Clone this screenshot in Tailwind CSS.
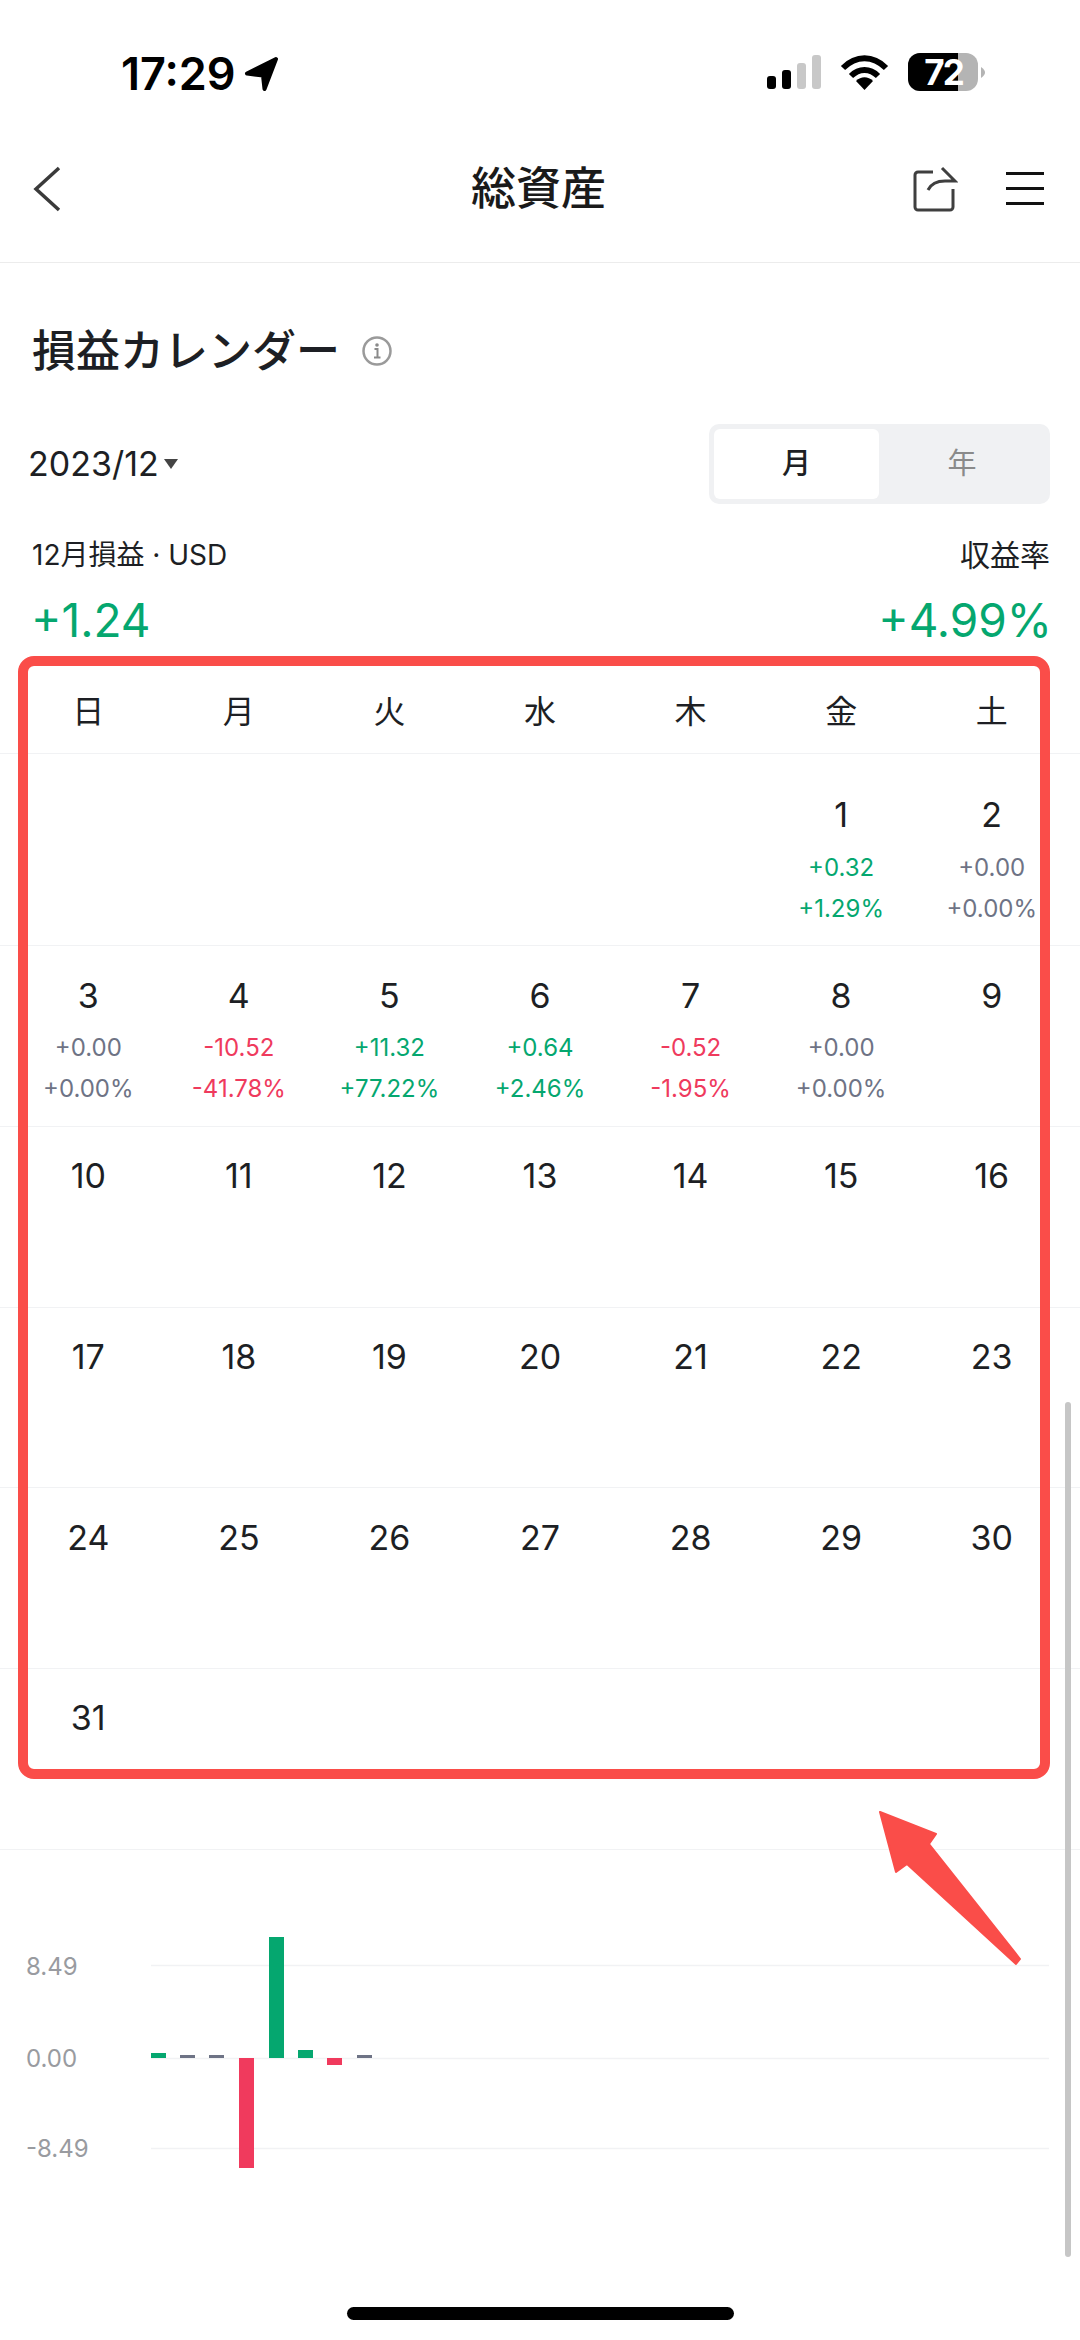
<!DOCTYPE html>
<html lang="ja">
<head>
  <meta charset="UTF-8" />
  <meta name="viewport" content="width=device-width, initial-scale=1.0"/>
  <title>総資産</title>
  <script src="https://cdn.jsdelivr.net/npm/@tailwindcss/browser@4"></script>
</head>
<body class="relative w-[1080px] h-[2340px] overflow-hidden bg-white text-[#1d1f24] font-['Inter','Noto_Sans_CJK_JP',sans-serif]">

  <!-- Status bar -->
  <div class="flex justify-between h-[115px] pt-[41px] pl-[121px] pr-[95px]">
    <div class="flex items-start gap-[8px] pt-[12px]">
      <span class="text-[45px] leading-[41px] font-semibold text-black">17:29</span>
      <svg class="mt-[3px]" width="36" height="36" viewBox="0 0 36 36">
        <path d="M32 3 3 17.500 19 19.500 20.500 33Z" fill="#000" stroke="#000" stroke-width="4" stroke-linejoin="round"/>
      </svg>
    </div>
    <svg width="218" height="64" viewBox="767 41 218 64">
      <rect x="767" y="76" width="9" height="13" rx="3" fill="#000"/>
      <rect x="782" y="70" width="9" height="19" rx="3" fill="#000"/>
      <rect x="797" y="63" width="9" height="26" rx="3" fill="#c8c8c8"/>
      <rect x="812" y="55" width="9" height="34" rx="3" fill="#c8c8c8"/>
      <path d="M843 68C856 55 873 55 886 68" fill="none" stroke="#000" stroke-width="6"/>
      <path d="M851 76C859 68 870 68 878 76" fill="none" stroke="#000" stroke-width="6"/>
      <path d="M856 81C861 76 868 76 873 81L864.500 90Z" fill="#000"/>
      <rect x="908" y="53" width="70" height="38" rx="12" fill="#b4b4b4"/>
      <path d="M920 53H958V91H920A12 12 0 0 1 908 79V65A12 12 0 0 1 920 53Z" fill="#000"/>
      <path d="M981 67C984 69 985 71 985 72.500C985 74 984 76 981 78Z" fill="#b4b4b4"/>
      <text x="943.500" y="85" text-anchor="middle" fill="#fff" font-size="35" font-weight="700" letter-spacing="-2" font-family="Inter">72</text>
    </svg>
  </div>

  <!-- Nav -->
  <div class="flex items-center h-[148px] border-b border-[#ececec]">
    <div class="flex-1 pl-[33px]">
      <svg class="block" width="28" height="46" viewBox="0 0 28 46">
        <path d="M26 2 3 23 26 44" fill="none" stroke="#3a3a3a" stroke-width="3.500"/>
      </svg>
    </div>
    <div class="text-[45px] leading-[60px] font-medium text-[#1a1a1a]">総資産</div>
    <div class="flex-1 flex justify-end items-center gap-[48px] pr-[36px]">
      <svg class="block" width="46" height="46" viewBox="0 0 46 46">
        <path d="M21 6H6A3 3 0 0 0 3 9V41A3 3 0 0 0 6 44H38A3 3 0 0 0 41 41V23" fill="none" stroke="#3f3f3f" stroke-width="3"/>
        <path d="M30 2 43 15H33C24 15 19 18 16 24" fill="none" stroke="#3f3f3f" stroke-width="3"/>
      </svg>
      <div class="flex flex-col gap-[12px] w-[38px]">
        <div class="h-[3px] bg-[#111]"></div>
        <div class="h-[3px] bg-[#111]"></div>
        <div class="h-[3px] bg-[#111]"></div>
      </div>
    </div>
  </div>

  <!-- Heading -->
  <div class="flex items-center gap-[22px] mt-[58px] pl-[32px] h-[60px]">
    <h1 class="text-[44px] leading-[60px] font-medium">損益カレンダー</h1>
    <svg width="30" height="30" viewBox="0 0 30 30">
      <circle cx="15" cy="15" r="13.500" fill="none" stroke="#9a9a9a" stroke-width="2.500"/>
      <circle cx="15" cy="9" r="1.800" fill="#8a8a8a"/>
      <path d="M12.500 13H15.500V21M12 21.500H18.500" fill="none" stroke="#8a8a8a" stroke-width="2"/>
    </svg>
  </div>

  <!-- Month picker + toggle -->
  <div class="flex items-center justify-between mt-[43px] pl-[28px] pr-[30px]">
    <div class="flex items-center gap-[5px]">
      <span class="text-[34px] leading-[40px]">2023/12</span>
      <svg width="14" height="10" viewBox="0 0 14 10"><path d="M0 0H14L7 10Z" fill="#444"/></svg>
    </div>
    <div class="flex w-[341px] h-[80px] p-[5px] rounded-[10px] bg-[#f0f1f3]">
      <div class="flex items-center justify-center w-[165px] rounded-[6px] bg-white text-[29px] font-medium">月</div>
      <div class="flex items-center justify-center flex-1 text-[29px] text-[#8a8a8a]">年</div>
    </div>
  </div>

  <!-- Month summary -->
  <div class="flex justify-between items-center mt-[31px] pl-[32px] pr-[30px] h-[40px]">
    <span class="text-[28px] leading-[40px]">12月損益 · USD</span>
    <span class="text-[30px] leading-[40px]">収益率</span>
  </div>
  <div class="flex justify-between mt-[15px] pl-[31px] pr-[28px] text-[46px] leading-[60px] text-[#05a76f]">
    <span>+1.24</span>
    <span>+4.99%</span>
  </div>

  <!-- Calendar -->
  <div class="grid grid-cols-7 h-[104px] pt-[42px] px-[13px] border-b border-[#f1f2f4] text-center text-[32px] leading-[40px]">
    <div>日</div><div>月</div><div>火</div><div>水</div><div>木</div><div>金</div><div>土</div>
  </div>

  <div class="grid grid-cols-7 h-[192px] pt-[41px] px-[13px] border-b border-[#f1f2f4] text-center text-[34px] leading-[40px]">
    <div></div><div></div><div></div><div></div><div></div>
    <div>1<div class="mt-[12px] text-[24px] leading-[41px] text-[#05a76f]">+0.32<br>+1.29%</div></div>
    <div>2<div class="mt-[12px] text-[24px] leading-[41px] text-[#6e7385]">+0.00<br>+0.00%</div></div>
  </div>

  <div class="grid grid-cols-7 h-[181px] pt-[30px] px-[13px] border-b border-[#f1f2f4] text-center text-[34px] leading-[40px]">
    <div>3<div class="mt-[11px] text-[24px] leading-[41px] text-[#6e7385]">+0.00<br>+0.00%</div></div>
    <div>4<div class="mt-[11px] text-[24px] leading-[41px] text-[#ef3a5d]">-10.52<br>-41.78%</div></div>
    <div>5<div class="mt-[11px] text-[24px] leading-[41px] text-[#05a76f]">+11.32<br>+77.22%</div></div>
    <div>6<div class="mt-[11px] text-[24px] leading-[41px] text-[#05a76f]">+0.64<br>+2.46%</div></div>
    <div>7<div class="mt-[11px] text-[24px] leading-[41px] text-[#ef3a5d]">-0.52<br>-1.95%</div></div>
    <div>8<div class="mt-[11px] text-[24px] leading-[41px] text-[#6e7385]">+0.00<br>+0.00%</div></div>
    <div>9</div>
  </div>

  <div class="grid grid-cols-7 h-[181px] pt-[29px] px-[13px] border-b border-[#f1f2f4] text-center text-[34px] leading-[40px]">
    <div>10</div><div>11</div><div>12</div><div>13</div><div>14</div><div>15</div><div>16</div>
  </div>
  <div class="grid grid-cols-7 h-[180px] pt-[29px] px-[13px] border-b border-[#f1f2f4] text-center text-[34px] leading-[40px]">
    <div>17</div><div>18</div><div>19</div><div>20</div><div>21</div><div>22</div><div>23</div>
  </div>
  <div class="grid grid-cols-7 h-[181px] pt-[30px] px-[13px] border-b border-[#f1f2f4] text-center text-[34px] leading-[40px]">
    <div>24</div><div>25</div><div>26</div><div>27</div><div>28</div><div>29</div><div>30</div>
  </div>
  <div class="grid grid-cols-7 h-[181px] pt-[29px] px-[13px] border-b border-[#f1f2f4] text-center text-[34px] leading-[40px]">
    <div>31</div>
  </div>

  <!-- Bar chart -->
  <div class="flex">
    <div class="flex flex-col w-[151px] pl-[26px] pt-[102px] text-[24px] leading-[30px] text-[#999ba0]">
      <span>8.49</span>
      <span class="mt-[62px]">0.00</span>
      <span class="mt-[60px]">-8.49</span>
    </div>
    <svg width="898" height="340" viewBox="151 1851 898 340">
      <path d="M151 1966.500H1049M151 2059.500H1049M151 2149.500H1049" stroke="#f1f2f4" stroke-width="1.500"/>
      <rect x="151" y="2054" width="15" height="5" fill="#05a76f"/>
      <rect x="180" y="2056" width="15" height="3" fill="#6e7385"/>
      <rect x="209" y="2056" width="15" height="3" fill="#6e7385"/>
      <rect x="239" y="2059" width="15" height="110" fill="#f03a5d"/>
      <rect x="269" y="1938" width="15" height="121" fill="#05a76f"/>
      <rect x="298" y="2051" width="15" height="8" fill="#05a76f"/>
      <rect x="327" y="2059" width="15" height="7" fill="#f03a5d"/>
      <rect x="357" y="2056" width="15" height="3" fill="#6e7385"/>
    </svg>
  </div>

  <!-- Scrollbar -->
  <div class="absolute left-[1065px] top-[1402px] w-[6px] h-[855px] rounded-full bg-[#c6c6c6]"></div>

  <!-- Home indicator -->
  <div class="absolute left-[347px] top-[2307px] w-[387px] h-[13px] rounded-full bg-black"></div>

  <!-- Annotation: red box + arrow -->
  <div class="absolute left-[18px] top-[656px] w-[1032px] h-[1123px] border-[10px] border-[#fa4d49] rounded-[16px]"></div>
  <svg class="absolute left-0 top-0" width="1080" height="2340" viewBox="0 0 1080 2340">
    <path d="M880 1812 936 1834 929 1844 1020 1959 1016 1964 907 1864 896 1872Z" fill="#fa4d49" stroke="#fa4d49" stroke-width="2" stroke-linejoin="round"/>
  </svg>

</body>
</html>
